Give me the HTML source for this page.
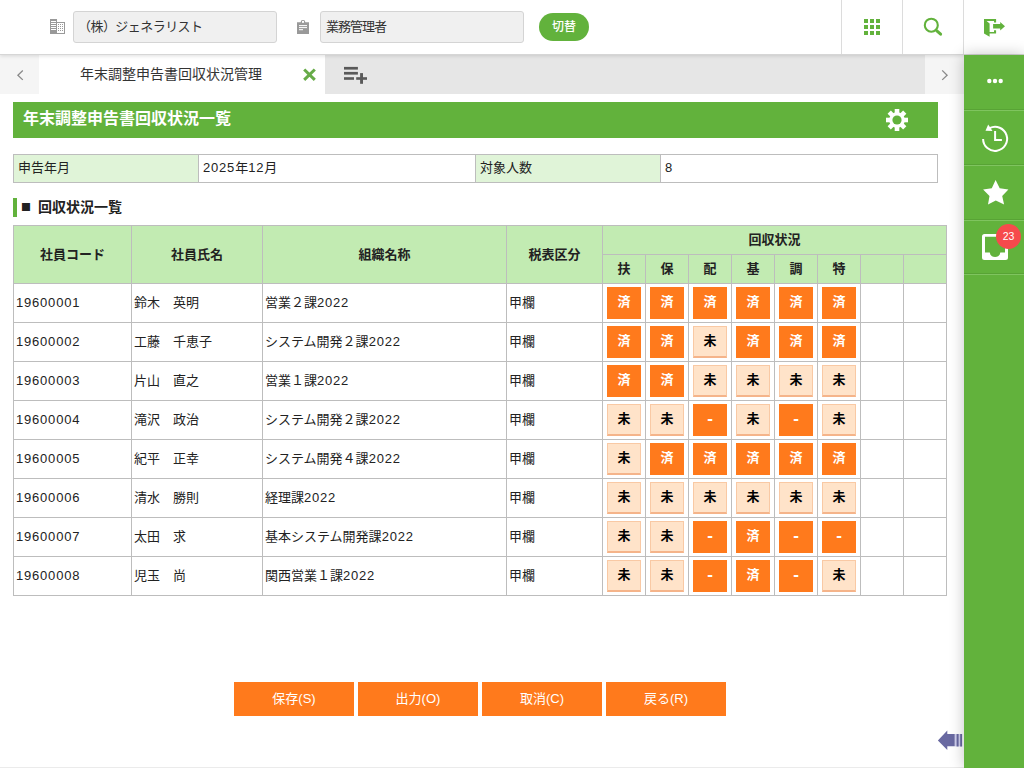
<!DOCTYPE html>
<html lang="ja"><head><meta charset="utf-8"><title>年末調整申告書回収状況管理</title>
<style>
*{box-sizing:border-box;margin:0;padding:0}
html,body{width:1024px;height:768px;overflow:hidden;background:#fff}
body{font-family:"Liberation Sans","Noto Sans CJK JP",sans-serif;font-size:13px;color:#222;position:relative}
.abs{position:absolute}
.hdr{left:0;top:0;width:1024px;height:55px;background:#fff;border-bottom:1px solid #d6d6d6;box-shadow:0 1px 4px rgba(0,0,0,.13);z-index:5}
.inp{background:#f0f0f0;border:1px solid #d4d4d4;border-radius:3px;height:32px;line-height:30px;padding-left:6px;font-size:13px;color:#333;white-space:nowrap}
.sw{left:539px;top:13px;width:50px;height:28px;border-radius:14px;background:#62b23c;color:#fff;font-size:12px;font-weight:500;line-height:29px;text-align:center}
.vsep{top:0;width:1px;height:54px;background:#dcdcdc}
.tabbar{left:0;top:55px;width:964px;height:39px;background:#e6e6e6}
.tarrow{top:55px;width:39px;height:39px;background:#f5f5f5}
.tab{left:39px;top:55px;width:286px;height:39px;background:#fff;font-size:14px;line-height:39px;color:#333;white-space:nowrap}
.side{left:964px;top:55px;width:60px;height:713px;background:#62b23c;box-shadow:0 0 14px rgba(0,0,0,.24)}
.sline{left:964px;width:60px;height:2px;background:linear-gradient(#58a335 50%,#7fc45f 50%)}
.banner{left:13px;top:102px;width:925px;height:36px;background:#62b23c;color:#fff;font-weight:bold;font-size:16px;line-height:33px;padding-left:10px;white-space:nowrap}
.cell{position:absolute;border:1px solid #bdbdbd;white-space:nowrap;overflow:hidden}
.g1{background:#e0f4d8}
.g2{background:#c2ebb2}
.th{font-weight:bold;text-align:center;color:#222}
.td{padding-left:2px;line-height:38px;font-size:13px;color:#222}
.b{position:absolute;width:34px;height:32px;font-weight:bold;font-size:13px;text-align:center;line-height:30px}
.bs{background:#ff7a1c;color:#fff}
.bd{font-size:17px;line-height:29px}
.bm{background:#ffe3c9;color:#000;border:1px solid #f9c9a4;border-bottom:2px solid #f5b48a;line-height:28px}
.l{letter-spacing:.8px}
.btn{position:absolute;top:682px;width:120px;height:34px;background:#ff7a1c;color:#fff;font-size:13px;text-align:center;line-height:33px}
</style></head><body>
<div class="abs hdr">
<svg class="abs" style="left:50px;top:19px" width="15" height="15" viewBox="0 0 15 15"><rect x="0" y="0" width="7" height="15" fill="#999"/><path d="M7 3H15V15H7zM7 4V14H14V4z" fill="#999" fill-rule="evenodd"/><g fill="#999"><rect x="8" y="5" width="1" height="1"/><rect x="10" y="5" width="1" height="1"/><rect x="12" y="5" width="1" height="1"/><rect x="8" y="7" width="1" height="1"/><rect x="10" y="7" width="1" height="1"/><rect x="12" y="7" width="1" height="1"/><rect x="8" y="9" width="1" height="1"/><rect x="10" y="9" width="1" height="1"/><rect x="12" y="9" width="1" height="1"/><rect x="8" y="11" width="1" height="1"/><rect x="10" y="11" width="1" height="1"/><rect x="12" y="11" width="1" height="1"/></g><g fill="#fff"><rect x="1" y="2" width="5" height="1"/><rect x="1" y="4" width="5" height="1"/><rect x="1" y="6" width="5" height="1"/><rect x="1" y="8" width="5" height="1"/><rect x="1" y="10" width="5" height="1"/></g></svg>
<div class="abs inp" style="left:73px;top:11px;width:204px;letter-spacing:-.55px;padding-left:4px">（株）ジェネラリスト</div>
<svg class="abs" style="left:297px;top:20px" width="12" height="14" viewBox="0 0 12 14"><path d="M0 2.200h3.700a2.300 2.300 0 0 1 4.600 0H12V14H0z" fill="#999"/><rect x="5" y="0.900" width="2" height="1.900" fill="#fff"/><g fill="#fff"><rect x="2" y="5.100" width="8" height="1"/><rect x="2" y="7.100" width="8" height="1"/><rect x="2" y="9.200" width="4" height="1"/></g></svg>
<div class="abs inp" style="left:320px;top:11px;width:204px;letter-spacing:-1px;padding-left:5px">業務管理者</div>
<div class="abs sw">切替</div>
<div class="abs vsep" style="left:841px"></div>
<div class="abs vsep" style="left:902px"></div>
<div class="abs vsep" style="left:963px"></div>
<svg class="abs" style="left:864px;top:19px" width="17" height="17" viewBox="0 0 17 17" fill="#62b23c"><rect x="0" y="0" width="4" height="4"/><rect x="6" y="0" width="4" height="4"/><rect x="12" y="0" width="4" height="4"/><rect x="0" y="6" width="4" height="4"/><rect x="6" y="6" width="4" height="4"/><rect x="12" y="6" width="4" height="4"/><rect x="0" y="12" width="4" height="4"/><rect x="6" y="12" width="4" height="4"/><rect x="12" y="12" width="4" height="4"/></svg>
<svg class="abs" style="left:922px;top:17px" width="22" height="22" viewBox="0 0 22 22"><circle cx="9.300" cy="8.200" r="6.500" fill="none" stroke="#62b23c" stroke-width="2.100"/><path d="M14.600 13.600l4 3.600" stroke="#62b23c" stroke-width="3" stroke-linecap="round"/></svg>
<svg class="abs" style="left:984px;top:19px" width="22" height="19" viewBox="0 0 22 19" fill="#62b23c"><path d="M0 0H12.100V3.400H10V2.100H2.600L5.600 4.400V13H10V11.200H12.100V14.600H5.600V17.800L0 14.600Z"/><path d="M9.100 5H16.200V3L21 7.300 16.200 11.600V9.600H9.100Z"/></svg>
</div>
<div class="abs tabbar"></div>
<div class="abs tarrow" style="left:0"></div>
<div class="abs tarrow" style="left:925px"></div>
<svg class="abs" style="left:15px;top:68px" width="10" height="14" viewBox="0 0 10 14"><path d="M7.800 2.500L2.900 7.200l4.900 4.700" fill="none" stroke="#8a8a8a" stroke-width="1.3"/></svg>
<svg class="abs" style="left:939px;top:68px" width="10" height="14" viewBox="0 0 10 14"><path d="M3.200 2.400L8.100 7.200l-4.900 4.700" fill="none" stroke="#8a8a8a" stroke-width="1.3"/></svg>
<div class="abs tab"><span style="position:absolute;left:41px">年末調整申告書回収状況管理</span></div>
<svg class="abs" style="left:302px;top:67px" width="15" height="15" viewBox="0 0 15 15"><path d="M2.200 2.500l10.600 10.400M12.800 2.500L2.200 12.900" stroke="#67ab48" stroke-width="3"/></svg>
<svg class="abs" style="left:343px;top:66px" width="26" height="19" viewBox="0 0 26 19" fill="#595959"><rect x="1" y="0.900" width="13.900" height="2.700"/><rect x="1" y="5.900" width="13.900" height="2.700"/><rect x="1" y="11.200" width="10" height="2.600"/><rect x="17.100" y="7.100" width="2.900" height="10.700"/><rect x="13.200" y="11.200" width="10.800" height="2.600"/></svg>
<div class="abs" style="left:0;top:0;width:0;height:0;z-index:7"><div class="abs side"></div>
<div class="abs sline" style="top:109px"></div>
<div class="abs sline" style="top:164px"></div>
<div class="abs sline" style="top:219px"></div>
<div class="abs sline" style="top:273px"></div>
<svg class="abs" style="left:986px;top:78px" width="18" height="6" viewBox="0 0 18 6" fill="#fff"><circle cx="3.300" cy="3" r="2.200"/><circle cx="9" cy="3" r="2.200"/><circle cx="14.700" cy="3" r="2.200"/></svg>
<svg class="abs" style="left:980px;top:120px" width="32" height="36" viewBox="0 0 32 36"><path d="M3.100 18.900A12 12 0 1 0 9.600 8.200" fill="none" stroke="#fff" stroke-width="2"/><path d="M8.200 4.500L5.500 10.700 12.500 11.100z" fill="#fff"/><path d="M15.100 11.100V20H21.900" fill="none" stroke="#fff" stroke-width="2"/></svg>
<svg class="abs" style="left:980px;top:176px" width="32" height="32" viewBox="0 0 32 32"><polygon points="15.60,4.00 19.70,12.30 28.40,13.60 22.20,20.00 24.10,28.60 15.80,24.40 8.00,28.60 9.50,20.00 3.10,13.60 11.80,12.30" fill="#fff"/></svg>
<svg class="abs" style="left:982px;top:234px" width="26" height="26" viewBox="0 0 26 26"><path d="M2.500 0h21a2.500 2.500 0 0 1 2.500 2.500v21a2.500 2.500 0 0 1-2.500 2.500h-21a2.500 2.500 0 0 1-2.500-2.500v-21a2.500 2.500 0 0 1 2.500-2.500zM3 2.800V18.400H7.800A5.300 5.300 0 0 0 18.300 18.400H23V2.800z" fill="#fff" fill-rule="evenodd"/></svg>
<div class="abs" style="left:996px;top:224px;width:25px;height:25px;border-radius:13px;background:#f64a4c;color:#fff;font-size:10.500px;line-height:24px;text-align:center">23</div>
</div>
<div class="abs banner">年末調整申告書回収状況一覧</div>
<svg class="abs" style="left:885px;top:108px" width="24" height="24" viewBox="-12 -12 24 24"><g fill="#fff"><circle r="7.800"/><rect x="-2.300" y="-11" width="4.600" height="6" transform="rotate(0)"/><rect x="-2.300" y="-11" width="4.600" height="6" transform="rotate(45)"/><rect x="-2.300" y="-11" width="4.600" height="6" transform="rotate(90)"/><rect x="-2.300" y="-11" width="4.600" height="6" transform="rotate(135)"/><rect x="-2.300" y="-11" width="4.600" height="6" transform="rotate(180)"/><rect x="-2.300" y="-11" width="4.600" height="6" transform="rotate(225)"/><rect x="-2.300" y="-11" width="4.600" height="6" transform="rotate(270)"/><rect x="-2.300" y="-11" width="4.600" height="6" transform="rotate(315)"/></g><circle r="4.600" fill="#62b23c"/></svg>
<div class="cell g1" style="left:13px;top:154px;width:186px;height:29px;padding-left:4px;line-height:26px;font-size:13px">申告年月</div>
<div class="cell " style="left:198px;top:154px;width:278px;height:29px;padding-left:4px;line-height:26px;font-size:13px"><span class="l">2025</span>年<span class="l">12</span>月</div>
<div class="cell g1" style="left:475px;top:154px;width:186px;height:29px;padding-left:4px;line-height:26px;font-size:13px">対象人数</div>
<div class="cell " style="left:660px;top:154px;width:278px;height:29px;padding-left:4px;line-height:26px;font-size:13px"><span class="l">8</span></div>
<div class="abs" style="left:13px;top:198px;width:4px;height:19px;background:#62b23c"></div>
<div class="abs" style="left:21px;top:197px;width:12px;font-family:Noto Sans CJK JP,sans-serif;font-size:10px;line-height:20px;white-space:nowrap;color:#222">■</div><div class="abs" style="left:38px;top:197px;font-size:14px;font-weight:bold;line-height:20px;white-space:nowrap">回収状況一覧</div>
<div class="cell g2 th" style="left:13px;top:225px;width:119px;height:59px;line-height:57px">社員コード</div>
<div class="cell g2 th" style="left:131px;top:225px;width:132px;height:59px;line-height:57px">社員氏名</div>
<div class="cell g2 th" style="left:262px;top:225px;width:245px;height:59px;line-height:57px">組織名称</div>
<div class="cell g2 th" style="left:506px;top:225px;width:97px;height:59px;line-height:57px">税表区分</div>
<div class="cell g2 th" style="left:602px;top:225px;width:345px;height:30px;line-height:28px">回収状況</div>
<div class="cell g2 th" style="left:602px;top:254px;width:44px;height:30px;line-height:28px">扶</div>
<div class="cell g2 th" style="left:645px;top:254px;width:44px;height:30px;line-height:28px">保</div>
<div class="cell g2 th" style="left:688px;top:254px;width:44px;height:30px;line-height:28px">配</div>
<div class="cell g2 th" style="left:731px;top:254px;width:44px;height:30px;line-height:28px">基</div>
<div class="cell g2 th" style="left:774px;top:254px;width:44px;height:30px;line-height:28px">調</div>
<div class="cell g2 th" style="left:817px;top:254px;width:44px;height:30px;line-height:28px">特</div>
<div class="cell g2 th" style="left:860px;top:254px;width:44px;height:30px;line-height:28px"></div>
<div class="cell g2 th" style="left:903px;top:254px;width:44px;height:30px;line-height:28px"></div>
<div class="cell td" style="left:13px;top:283px;width:119px;height:40px;"><span class="l">19600001</span></div>
<div class="cell td" style="left:131px;top:283px;width:132px;height:40px;">鈴木　英明</div>
<div class="cell td" style="left:262px;top:283px;width:245px;height:40px;">営業２課<span class="l">2022</span></div>
<div class="cell td" style="left:506px;top:283px;width:97px;height:40px;">甲欄</div>
<div class="cell " style="left:602px;top:283px;width:44px;height:40px;"><div class="b bs" style="left:4px;top:3px">済</div></div>
<div class="cell " style="left:645px;top:283px;width:44px;height:40px;"><div class="b bs" style="left:4px;top:3px">済</div></div>
<div class="cell " style="left:688px;top:283px;width:44px;height:40px;"><div class="b bs" style="left:4px;top:3px">済</div></div>
<div class="cell " style="left:731px;top:283px;width:44px;height:40px;"><div class="b bs" style="left:4px;top:3px">済</div></div>
<div class="cell " style="left:774px;top:283px;width:44px;height:40px;"><div class="b bs" style="left:4px;top:3px">済</div></div>
<div class="cell " style="left:817px;top:283px;width:44px;height:40px;"><div class="b bs" style="left:4px;top:3px">済</div></div>
<div class="cell " style="left:860px;top:283px;width:44px;height:40px;"></div>
<div class="cell " style="left:903px;top:283px;width:44px;height:40px;"></div>
<div class="cell td" style="left:13px;top:322px;width:119px;height:40px;"><span class="l">19600002</span></div>
<div class="cell td" style="left:131px;top:322px;width:132px;height:40px;">工藤　千恵子</div>
<div class="cell td" style="left:262px;top:322px;width:245px;height:40px;">システム開発２課<span class="l">2022</span></div>
<div class="cell td" style="left:506px;top:322px;width:97px;height:40px;">甲欄</div>
<div class="cell " style="left:602px;top:322px;width:44px;height:40px;"><div class="b bs" style="left:4px;top:3px">済</div></div>
<div class="cell " style="left:645px;top:322px;width:44px;height:40px;"><div class="b bs" style="left:4px;top:3px">済</div></div>
<div class="cell " style="left:688px;top:322px;width:44px;height:40px;"><div class="b bm" style="left:4px;top:3px">未</div></div>
<div class="cell " style="left:731px;top:322px;width:44px;height:40px;"><div class="b bs" style="left:4px;top:3px">済</div></div>
<div class="cell " style="left:774px;top:322px;width:44px;height:40px;"><div class="b bs" style="left:4px;top:3px">済</div></div>
<div class="cell " style="left:817px;top:322px;width:44px;height:40px;"><div class="b bs" style="left:4px;top:3px">済</div></div>
<div class="cell " style="left:860px;top:322px;width:44px;height:40px;"></div>
<div class="cell " style="left:903px;top:322px;width:44px;height:40px;"></div>
<div class="cell td" style="left:13px;top:361px;width:119px;height:40px;"><span class="l">19600003</span></div>
<div class="cell td" style="left:131px;top:361px;width:132px;height:40px;">片山　直之</div>
<div class="cell td" style="left:262px;top:361px;width:245px;height:40px;">営業１課<span class="l">2022</span></div>
<div class="cell td" style="left:506px;top:361px;width:97px;height:40px;">甲欄</div>
<div class="cell " style="left:602px;top:361px;width:44px;height:40px;"><div class="b bs" style="left:4px;top:3px">済</div></div>
<div class="cell " style="left:645px;top:361px;width:44px;height:40px;"><div class="b bs" style="left:4px;top:3px">済</div></div>
<div class="cell " style="left:688px;top:361px;width:44px;height:40px;"><div class="b bm" style="left:4px;top:3px">未</div></div>
<div class="cell " style="left:731px;top:361px;width:44px;height:40px;"><div class="b bm" style="left:4px;top:3px">未</div></div>
<div class="cell " style="left:774px;top:361px;width:44px;height:40px;"><div class="b bm" style="left:4px;top:3px">未</div></div>
<div class="cell " style="left:817px;top:361px;width:44px;height:40px;"><div class="b bm" style="left:4px;top:3px">未</div></div>
<div class="cell " style="left:860px;top:361px;width:44px;height:40px;"></div>
<div class="cell " style="left:903px;top:361px;width:44px;height:40px;"></div>
<div class="cell td" style="left:13px;top:400px;width:119px;height:40px;"><span class="l">19600004</span></div>
<div class="cell td" style="left:131px;top:400px;width:132px;height:40px;">滝沢　政治</div>
<div class="cell td" style="left:262px;top:400px;width:245px;height:40px;">システム開発２課<span class="l">2022</span></div>
<div class="cell td" style="left:506px;top:400px;width:97px;height:40px;">甲欄</div>
<div class="cell " style="left:602px;top:400px;width:44px;height:40px;"><div class="b bm" style="left:4px;top:3px">未</div></div>
<div class="cell " style="left:645px;top:400px;width:44px;height:40px;"><div class="b bm" style="left:4px;top:3px">未</div></div>
<div class="cell " style="left:688px;top:400px;width:44px;height:40px;"><div class="b bs bd" style="left:4px;top:3px">-</div></div>
<div class="cell " style="left:731px;top:400px;width:44px;height:40px;"><div class="b bm" style="left:4px;top:3px">未</div></div>
<div class="cell " style="left:774px;top:400px;width:44px;height:40px;"><div class="b bs bd" style="left:4px;top:3px">-</div></div>
<div class="cell " style="left:817px;top:400px;width:44px;height:40px;"><div class="b bm" style="left:4px;top:3px">未</div></div>
<div class="cell " style="left:860px;top:400px;width:44px;height:40px;"></div>
<div class="cell " style="left:903px;top:400px;width:44px;height:40px;"></div>
<div class="cell td" style="left:13px;top:439px;width:119px;height:40px;"><span class="l">19600005</span></div>
<div class="cell td" style="left:131px;top:439px;width:132px;height:40px;">紀平　正幸</div>
<div class="cell td" style="left:262px;top:439px;width:245px;height:40px;">システム開発４課<span class="l">2022</span></div>
<div class="cell td" style="left:506px;top:439px;width:97px;height:40px;">甲欄</div>
<div class="cell " style="left:602px;top:439px;width:44px;height:40px;"><div class="b bm" style="left:4px;top:3px">未</div></div>
<div class="cell " style="left:645px;top:439px;width:44px;height:40px;"><div class="b bs" style="left:4px;top:3px">済</div></div>
<div class="cell " style="left:688px;top:439px;width:44px;height:40px;"><div class="b bs" style="left:4px;top:3px">済</div></div>
<div class="cell " style="left:731px;top:439px;width:44px;height:40px;"><div class="b bs" style="left:4px;top:3px">済</div></div>
<div class="cell " style="left:774px;top:439px;width:44px;height:40px;"><div class="b bs" style="left:4px;top:3px">済</div></div>
<div class="cell " style="left:817px;top:439px;width:44px;height:40px;"><div class="b bs" style="left:4px;top:3px">済</div></div>
<div class="cell " style="left:860px;top:439px;width:44px;height:40px;"></div>
<div class="cell " style="left:903px;top:439px;width:44px;height:40px;"></div>
<div class="cell td" style="left:13px;top:478px;width:119px;height:40px;"><span class="l">19600006</span></div>
<div class="cell td" style="left:131px;top:478px;width:132px;height:40px;">清水　勝則</div>
<div class="cell td" style="left:262px;top:478px;width:245px;height:40px;">経理課<span class="l">2022</span></div>
<div class="cell td" style="left:506px;top:478px;width:97px;height:40px;">甲欄</div>
<div class="cell " style="left:602px;top:478px;width:44px;height:40px;"><div class="b bm" style="left:4px;top:3px">未</div></div>
<div class="cell " style="left:645px;top:478px;width:44px;height:40px;"><div class="b bm" style="left:4px;top:3px">未</div></div>
<div class="cell " style="left:688px;top:478px;width:44px;height:40px;"><div class="b bm" style="left:4px;top:3px">未</div></div>
<div class="cell " style="left:731px;top:478px;width:44px;height:40px;"><div class="b bm" style="left:4px;top:3px">未</div></div>
<div class="cell " style="left:774px;top:478px;width:44px;height:40px;"><div class="b bm" style="left:4px;top:3px">未</div></div>
<div class="cell " style="left:817px;top:478px;width:44px;height:40px;"><div class="b bm" style="left:4px;top:3px">未</div></div>
<div class="cell " style="left:860px;top:478px;width:44px;height:40px;"></div>
<div class="cell " style="left:903px;top:478px;width:44px;height:40px;"></div>
<div class="cell td" style="left:13px;top:517px;width:119px;height:40px;"><span class="l">19600007</span></div>
<div class="cell td" style="left:131px;top:517px;width:132px;height:40px;">太田　求</div>
<div class="cell td" style="left:262px;top:517px;width:245px;height:40px;">基本システム開発課<span class="l">2022</span></div>
<div class="cell td" style="left:506px;top:517px;width:97px;height:40px;">甲欄</div>
<div class="cell " style="left:602px;top:517px;width:44px;height:40px;"><div class="b bm" style="left:4px;top:3px">未</div></div>
<div class="cell " style="left:645px;top:517px;width:44px;height:40px;"><div class="b bm" style="left:4px;top:3px">未</div></div>
<div class="cell " style="left:688px;top:517px;width:44px;height:40px;"><div class="b bs bd" style="left:4px;top:3px">-</div></div>
<div class="cell " style="left:731px;top:517px;width:44px;height:40px;"><div class="b bs" style="left:4px;top:3px">済</div></div>
<div class="cell " style="left:774px;top:517px;width:44px;height:40px;"><div class="b bs bd" style="left:4px;top:3px">-</div></div>
<div class="cell " style="left:817px;top:517px;width:44px;height:40px;"><div class="b bs bd" style="left:4px;top:3px">-</div></div>
<div class="cell " style="left:860px;top:517px;width:44px;height:40px;"></div>
<div class="cell " style="left:903px;top:517px;width:44px;height:40px;"></div>
<div class="cell td" style="left:13px;top:556px;width:119px;height:40px;"><span class="l">19600008</span></div>
<div class="cell td" style="left:131px;top:556px;width:132px;height:40px;">児玉　尚</div>
<div class="cell td" style="left:262px;top:556px;width:245px;height:40px;">関西営業１課<span class="l">2022</span></div>
<div class="cell td" style="left:506px;top:556px;width:97px;height:40px;">甲欄</div>
<div class="cell " style="left:602px;top:556px;width:44px;height:40px;"><div class="b bm" style="left:4px;top:3px">未</div></div>
<div class="cell " style="left:645px;top:556px;width:44px;height:40px;"><div class="b bm" style="left:4px;top:3px">未</div></div>
<div class="cell " style="left:688px;top:556px;width:44px;height:40px;"><div class="b bs bd" style="left:4px;top:3px">-</div></div>
<div class="cell " style="left:731px;top:556px;width:44px;height:40px;"><div class="b bs" style="left:4px;top:3px">済</div></div>
<div class="cell " style="left:774px;top:556px;width:44px;height:40px;"><div class="b bs bd" style="left:4px;top:3px">-</div></div>
<div class="cell " style="left:817px;top:556px;width:44px;height:40px;"><div class="b bm" style="left:4px;top:3px">未</div></div>
<div class="cell " style="left:860px;top:556px;width:44px;height:40px;"></div>
<div class="cell " style="left:903px;top:556px;width:44px;height:40px;"></div>
<div class="btn" style="left:234px">保存(S)</div>
<div class="btn" style="left:358px">出力(O)</div>
<div class="btn" style="left:482px">取消(C)</div>
<div class="btn" style="left:606px">戻る(R)</div>
<svg class="abs" style="left:937px;top:730px" width="26" height="22" viewBox="0 0 26 22" fill="#6969a1"><rect x="17.700" y="4" width="7.400" height="12.400" fill="#cfcfee"/><path d="M0.900 10.500L10.300 0.500V4H17.700V16.300H10.300V20Z"/><rect x="19.600" y="4" width="2" height="12.500"/><rect x="23.200" y="4" width="1.900" height="12.500"/></svg>
<div class="abs" style="left:0;top:767px;width:964px;height:1px;background:#ebebeb"></div>
</body></html>
